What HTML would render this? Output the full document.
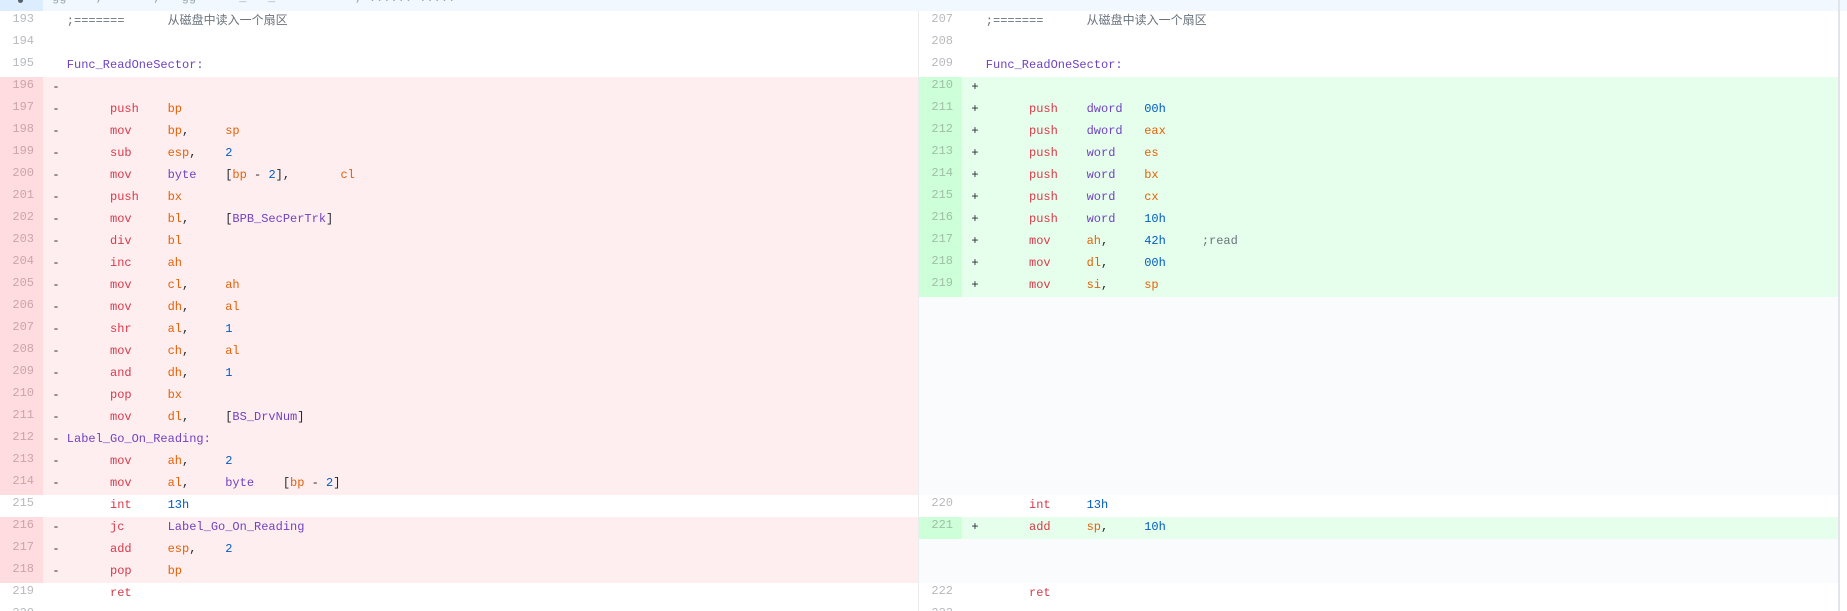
<!DOCTYPE html>
<html><head><meta charset="utf-8">
<style>
html,body{margin:0;padding:0;background:#fff;width:1847px;height:611px;overflow:hidden;position:relative}
.r{position:absolute;height:22px;font:12px/20px "Liberation Mono","Noto Sans CJK SC",monospace;white-space:pre;tab-size:8;-moz-tab-size:8}
.n{position:absolute;height:22px;width:34px;text-align:right;font:12px/20px "Liberation Mono",monospace;color:#b7b9bd}
.c{position:absolute;height:22px;font:12px/20px "Liberation Mono","Noto Sans CJK SC",monospace;white-space:pre;tab-size:8;-moz-tab-size:8;color:#24292e}
.k{color:#d73a49}.g{color:#e36209}.p{color:#6f42c1}.b{color:#005cc5}.m{color:#6a737d}
</style></head><body>
<div style="position:absolute;left:0;top:0;width:1847px;height:11px;background:#f1f8ff"></div>
<div style="position:absolute;left:0;top:0;width:43px;height:11px;background:#dbedff"></div>
<div style="position:absolute;left:18px;top:0;width:5px;height:3px;background:#586069;border-radius:0 0 3px 3px"></div>
<div style="position:absolute;left:52px;top:-9px;font:12px monospace;color:#9aa;white-space:pre">gg    ;       ;   gg      _   _           ; ...... .....</div>
<div style="position:absolute;left:1838px;top:0;width:2px;height:611px;background:#e1e4e8"></div>
<div style="position:absolute;left:918px;top:11px;width:1px;height:600px;background:#eaecef"></div>
<div id="L"></div>
<script>
const K=s=>'<span class="k">'+s+'</span>',G=s=>'<span class="g">'+s+'</span>',P=s=>'<span class="p">'+s+'</span>',B=s=>'<span class="b">'+s+'</span>',M=s=>'<span class="m">'+s+'</span>';
const T='\t';
const left=[
[193,'n','  '+M(';=======\t从磁盘中读入一个扇区')],
[194,'n',''],
[195,'n','  '+P('Func_ReadOneSector:')],
[196,'d','- '],
[197,'d','- \t'+K('push')+T+G('bp')],
[198,'d','- \t'+K('mov')+T+G('bp')+','+T+G('sp')],
[199,'d','- \t'+K('sub')+T+G('esp')+','+T+B('2')],
[200,'d','- \t'+K('mov')+T+P('byte')+T+'['+G('bp')+' - '+B('2')+'],'+T+G('cl')],
[201,'d','- \t'+K('push')+T+G('bx')],
[202,'d','- \t'+K('mov')+T+G('bl')+','+T+'['+P('BPB_SecPerTrk')+']'],
[203,'d','- \t'+K('div')+T+G('bl')],
[204,'d','- \t'+K('inc')+T+G('ah')],
[205,'d','- \t'+K('mov')+T+G('cl')+','+T+G('ah')],
[206,'d','- \t'+K('mov')+T+G('dh')+','+T+G('al')],
[207,'d','- \t'+K('shr')+T+G('al')+','+T+B('1')],
[208,'d','- \t'+K('mov')+T+G('ch')+','+T+G('al')],
[209,'d','- \t'+K('and')+T+G('dh')+','+T+B('1')],
[210,'d','- \t'+K('pop')+T+G('bx')],
[211,'d','- \t'+K('mov')+T+G('dl')+','+T+'['+P('BS_DrvNum')+']'],
[212,'d','- '+P('Label_Go_On_Reading:')],
[213,'d','- \t'+K('mov')+T+G('ah')+','+T+B('2')],
[214,'d','- \t'+K('mov')+T+G('al')+','+T+P('byte')+T+'['+G('bp')+' - '+B('2')+']'],
[215,'n','  \t'+K('int')+T+B('13h')],
[216,'d','- \t'+K('jc')+T+P('Label_Go_On_Reading')],
[217,'d','- \t'+K('add')+T+G('esp')+','+T+B('2')],
[218,'d','- \t'+K('pop')+T+G('bp')],
[219,'n','  \t'+K('ret')],
[220,'n','']
];
const right=[
[207,'n','  '+M(';=======\t从磁盘中读入一个扇区')],
[208,'n',''],
[209,'n','  '+P('Func_ReadOneSector:')],
[210,'a','+ '],
[211,'a','+ \t'+K('push')+T+P('dword')+T+B('00h')],
[212,'a','+ \t'+K('push')+T+P('dword')+T+G('eax')],
[213,'a','+ \t'+K('push')+T+P('word')+T+G('es')],
[214,'a','+ \t'+K('push')+T+P('word')+T+G('bx')],
[215,'a','+ \t'+K('push')+T+P('word')+T+G('cx')],
[216,'a','+ \t'+K('push')+T+P('word')+T+B('10h')],
[217,'a','+ \t'+K('mov')+T+G('ah')+','+T+B('42h')+T+M(';read')],
[218,'a','+ \t'+K('mov')+T+G('dl')+','+T+B('00h')],
[219,'a','+ \t'+K('mov')+T+G('si')+','+T+G('sp')],
0,0,0,0,0,0,0,0,0,
[220,'n','  \t'+K('int')+T+B('13h')],
[221,'a','+ \t'+K('add')+T+G('sp')+','+T+B('10h')],
0,0,
[222,'n','  \t'+K('ret')],
[223,'n','']
];
let h='';
function pane(rows,x0,w){
 rows.forEach((r,i)=>{
  const y=11+i*22;
  if(!r){h+=`<div style="position:absolute;left:${x0}px;top:${y}px;width:${w}px;height:22px;background:#fafbfc"></div>`;return;}
  const [n,t,c]=r;
  let gb='#fff',rb='#fff',nc='#b7b9bd';
  if(t=='d'){gb='#ffdce0';rb='#ffeef0';nc='#c9a5aa'}
  if(t=='a'){gb='#cdffd8';rb='#e6ffec';nc='#9fbfa6'}
  h+=`<div style="position:absolute;left:${x0}px;top:${y}px;width:43px;height:22px;background:${gb}"></div>`;
  h+=`<div style="position:absolute;left:${x0+43}px;top:${y}px;width:${w-43}px;height:22px;background:${rb}"></div>`;
  h+=`<div class="n" style="left:${x0}px;top:${y-2}px;color:${nc}">${n}</div>`;
  h+=`<div class="c" style="left:${x0+52.4}px;top:${y}px">${c}</div>`;
 });
}
pane(left,0,918);
pane(right,919,919);
document.getElementById('L').innerHTML=h;
</script>
</body></html>
